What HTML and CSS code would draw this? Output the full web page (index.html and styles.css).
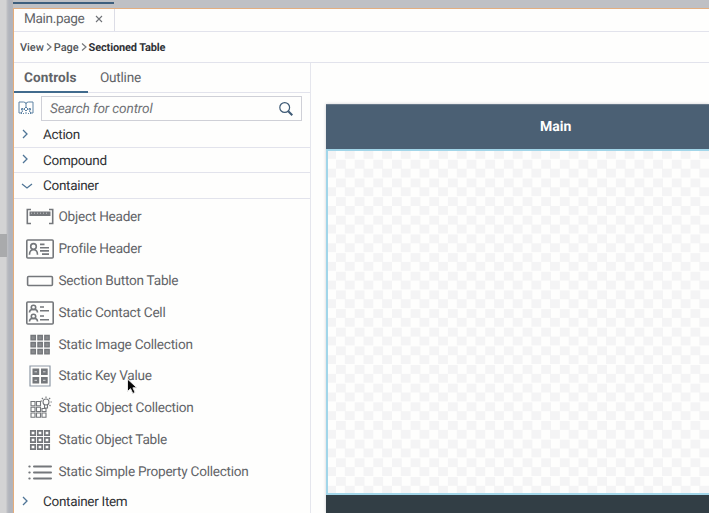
FILE: index.html
```html
<!DOCTYPE html>
<html lang="en">
<head>
<meta charset="utf-8">
<title>Main.page</title>
<link rel="stylesheet" href="styles.css">
</head>
<body>
<div class="app">
  <aside class="gutter"><span class="grip"></span></aside>
  <div class="editor">
    <div class="topbar"><span class="active-mark"></span></div>
    <div class="files"><div class="file"><span class="file-name">Main.page</span><svg class="close" viewBox="0 0 8 8"><path d="M1 1l6 6M7 1L1 7"/></svg></div></div>
    <nav class="crumbs"><span>View</span><svg viewBox="0 0 6 8"><path d="M1 .5L5 4 1 7.5"/></svg><span>Page</span><svg viewBox="0 0 6 8"><path d="M1 .5L5 4 1 7.5"/></svg><b>Sectioned Table</b></nav>
    <div class="work">
      <section class="panel">
        <div class="tabs"><span class="tab selected">Controls</span><span class="tab outline">Outline</span></div>
        <div class="search">
          <svg class="book" viewBox="0 0 16 14"><path d="M3 12H1V1h4.500Q8 1 8 3Q8 1 10.500 1H15v11h-2M8 3v3M3.500 13v-2l1.500-1M12.500 13v-2L11 10M6 13l-1-1M10 13l1-1"/><path d="M8 6l2 2-2 2-2-2zM3.500 7.500h1.500v1.500H3.500zM11 7.500h1.500v1.500H11zM7 12h2"/></svg>
          <div class="field"><span>Search for control</span><svg viewBox="0 0 14 14"><circle cx="5.700" cy="5.500" r="4.900"/><path class="handle" d="M9.300 9.300l4 4"/></svg></div>
        </div>
        <div class="group first"><svg viewBox="0 0 12 10"><path d="M3 1l4 4-4 4"/></svg><span>Action</span></div>
        <div class="group"><svg viewBox="0 0 12 10"><path d="M3 1l4 4-4 4"/></svg><span>Compound</span></div>
        <div class="group open"><svg viewBox="0 0 12 10"><path d="M1 3l5 4 5-4"/></svg><span>Container</span></div>
        <ul class="items">
          <li><svg viewBox="0 0 28 24"><path d="M5 4.500H1.300v14H5M23 4.500h3.700v14H23"/><path class="fill" d="M3.500 6.500h21V11h-21z"/><path class="dash" d="M5 8.200h18"/></svg><span>Object Header</span></li>
          <li><svg viewBox="0 0 28 24"><rect x=".8" y="3" width="26.400" height="18" rx="1"/><circle cx="7.500" cy="9.400" r="2.800"/><path d="M3.500 17.700q0-5 4-5t4 5M14 7.400h4.500M14 10.700h9M14 13.900h9M16 17.100h7"/></svg><span>Profile Header</span></li>
          <li><svg viewBox="0 0 28 24"><rect x="1.600" y="7.500" width="24.800" height="9" rx="1"/></svg><span>Section Button Table</span></li>
          <li><svg viewBox="0 0 28 24"><rect x=".8" y="1" width="26.400" height="22" rx="1"/><circle cx="7.500" cy="6.500" r="2.200"/><circle cx="7.500" cy="15.500" r="2.200"/><path d="M3.500 11.500q0-3.300 4-3.300t4 3.300M3.500 20.500q0-3.300 4-3.300t4 3.300M14 6h4M14 9.700h9M14 15h4M14 18.700h9"/></svg><span>Static Contact Cell</span></li>
          <li><svg viewBox="0 0 28 24"><path class="solid" d="M5 2.500h4.400v4.400H5zM11.900 2.500h4.400v4.400h-4.400zM18.800 2.500h4.400v4.400h-4.400zM5 9.500h4.400v4.400H5zM11.900 9.500h4.400v4.400h-4.400zM18.800 9.500h4.400v4.400h-4.400zM5 16.500h4.400v4.400H5zM11.900 16.500h4.400v4.400h-4.400zM18.800 16.500h4.400v4.400h-4.400z"/></svg><span>Static Image Collection</span></li>
          <li><svg viewBox="0 0 28 24"><path class="frame" d="M4 2h20v20H4z"/><path class="fill" d="M6.500 4.500h6.700V11H6.500zM15 4.500h6.700V11H15zM6.500 13h6.700v6.500H6.500zM15 13h6.700v6.500H15z"/><path class="light" d="M8.500 7.800H11M17 7.800h2.500M8.500 16.300H11M17 16.300h2.500"/></svg><span>Static Key Value</span></li>
          <li><svg viewBox="0 0 28 24"><path class="thin" d="M5 5.500h4v4.300H5zM10.500 5.500h4v4.300h-4zM5 11.200h4v4.300H5zM10.500 11.200h4v4.300h-4zM16 12.500h4v3h-4zM5 17h4v4.300H5zM10.500 17h4v4.300h-4zM16 17h4v4.300h-4z"/><circle class="thin" cx="20" cy="6" r="3"/><path class="thin" d="M18.500 9v3h3V9M20 .5V2M15.800 2L17 3M24.200 2L23 3M24.500 6h1.300M23.500 9l1 1M14.500 5H16"/></svg><span>Static Object Collection</span></li>
          <li><svg viewBox="0 0 28 24"><path class="bold" d="M4.800 2.800h4.400v4.400H4.800zM11.800 2.800h4.400v4.400h-4.400zM18.800 2.800h4.400v4.400h-4.400zM4.800 9.800h4.400v4.400H4.800zM11.800 9.800h4.400v4.400h-4.400zM18.800 9.800h4.400v4.400h-4.400zM4.800 16.800h4.400v4.400H4.800zM11.800 16.800h4.400v4.400h-4.400zM18.800 16.800h4.400v4.400h-4.400z"/></svg><span>Static Object Table</span></li>
          <li><svg viewBox="0 0 28 24"><path class="list" d="M3.300 6.500h.4M8 6.500h17M3.300 12.500h.4M8 12.500h17M3.300 18.500h.4M8 18.500h17"/></svg><span>Static Simple Property Collection</span></li>
        </ul>
        <div class="group last"><svg viewBox="0 0 12 10"><path d="M3 1l4 4-4 4"/></svg><span>Container Item</span></div>
      </section>
      <main class="canvas"><div class="device"><header><span>Main</span></header><div class="drop"></div><footer></footer></div></main>
    </div>
  </div>
</div>
<svg class="cursor" viewBox="0 0 12 18"><path d="M1.500 1v12.500l3-2.800 2.300 4.800 2.300-1.100-2.200-4.600h4z"/></svg>
</body>
</html>
```
FILE: styles.css
```css
* { box-sizing: border-box; }
body { margin: 0; width: 709px; height: 513px; overflow: hidden; background: #fefefd; font: 13.6px Roboto, sans-serif; letter-spacing: -0.25px; text-rendering: geometricPrecision; color: #626468; }
svg { display: block; flex: none; fill: none; stroke: #74777b; stroke-width: 1.6; overflow: visible; }
span, b { white-space: nowrap; }
.app { display: flex; height: 513px; }
.gutter { width: 13px; flex: none; background: linear-gradient(90deg, #d3d3d4 0 6px, #bfc0c4 7px, #b1b4bc 9px 12px, #b9b3b2 13px); padding-top: 234px; }
.grip { display: block; width: 7px; height: 23px; background: #a9aaac; }
.editor { flex: 1; min-width: 0; border-left: 1px solid #e5ad7b; }
.topbar { height: 9px; margin-left: -1px; background: #bfc0c4; border-bottom: 1px solid #e3ae80; padding-top: 2px; }
.active-mark { display: block; width: 101px; height: 2px; background: #3d5e7d; }
.files { height: 23px; border-bottom: 1px solid #e2e3ec; }
.file { width: 101px; height: 22px; border-right: 1px solid #dcdde6; display: flex; align-items: center; padding: 0 0 2px 10px; }
.file-name { width: 61px; letter-spacing: -0.35px; }
.close { width: 8px; height: 8px; margin-left: 10px; stroke: #707377; stroke-width: 1.1; }
.crumbs { height: 31px; display: flex; align-items: center; padding-left: 6px; border-bottom: 1px solid #e2e3ec; font-size: 11px; letter-spacing: -0.05px; font-weight: 500; color: #505357; }
.crumbs svg { width: 6px; height: 8px; margin: 0 2px 0 2px; stroke-width: 1.2; }
.crumbs b { color: #303236; letter-spacing: -0.15px; }
.work { display: flex; height: 450px; }
.panel { width: 297px; flex: none; border-right: 1px solid #e5e6ed; }
.tabs { height: 30px; border-bottom: 1px solid #e2e3ec; display: flex; }
.tab { height: 30px; line-height: 30px; padding-left: 10px; }
.selected { width: 74px; font-weight: 700; letter-spacing: 0.1px; border-bottom: 2px solid #416b8d; }
.outline { padding-left: 12px; }
.search { height: 29px; display: flex; padding: 3px 8px 0 4px; }
.book { width: 16px; height: 14px; margin: 5px 7px 0 0; stroke: #5e83a4; stroke-width: 1; }
.field { width: 261px; height: 25px; border: 1px solid #cfd0d7; display: flex; align-items: center; justify-content: space-between; padding: 0 8px; font-style: italic; letter-spacing: -0.13px; color: #707276; }
.field svg { width: 14px; height: 14px; stroke: #3e5a75; stroke-width: 1.2; }
.field .handle { stroke-width: 2; }
.group { height: 25.3px; border-bottom: 1px solid #e2e3ec; display: flex; align-items: center; padding: 1px 0 0 6px; color: #303235; font-size: 13.5px; letter-spacing: -0.3px; }
.group svg { width: 12px; height: 10px; margin: -3px 11px 0 0; stroke: #4f7596; stroke-width: 1.3; }
.group.open svg { margin: 0 10px 0 1px; }
.group.first { height: 26px; }
.group.last { height: 26px; border: 0; }
.items { list-style: none; margin: 0; padding: 3px 0 0; height: 290px; }
.items li { height: 31.8px; display: flex; align-items: center; padding-left: 12px; }
.items li svg { width: 28px; height: 24px; margin-right: 4.5px; }
.items .fill { fill: #74777b; stroke: none; }
.items .dash { stroke: #c5c6c8; stroke-width: 1; stroke-dasharray: 1 2; }
.items .solid { fill: #898b8e; stroke-width: 1.3; }
.items .frame { stroke: #8d98a6; stroke-width: 1.2; }
.items .light { stroke: #d9dadc; stroke-width: 1; }
.items .thin { stroke-width: 1.1; }
.items .bold { stroke-width: 1.7; }
.items .list { stroke-width: 2; stroke-linecap: round; }
.canvas { flex: 1; min-width: 0; padding: 41px 0 0 15px; }
.device { box-shadow: 0 0 3px #cfd0d2; }
.device header { height: 45px; background: #4b6074; border-top: 1px solid #68798a; color: #fff; display: flex; align-items: center; padding: 0 0 1px 214px; font-weight: 700; font-size: 14px; letter-spacing: 0; }
.drop { height: 346px; border: 2px solid #a2d6e9; border-right: 0; background-color: #fefefd; background-image: conic-gradient(#f4f4f5 25%, transparent 0 50%, #f4f4f5 0 75%, transparent 0); background-size: 18.67px 18.67px; background-position: 8px -1px; }
.device footer { height: 18px; background: #323e45; }
.cursor { position: absolute; left: 126px; top: 378px; width: 12px; height: 18px; fill: #080808; stroke: #e8e8e8; stroke-width: 1; }
```
